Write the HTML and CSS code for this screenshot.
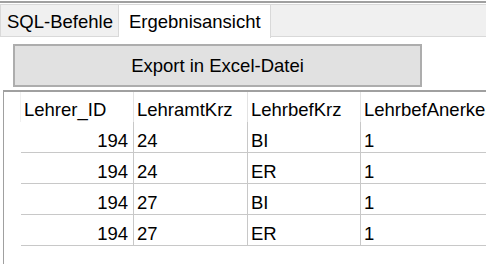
FILE: index.html
```html
<!DOCTYPE html>
<html>
<head>
<meta charset="utf-8">
<link rel="stylesheet" href="styles.css">
</head>
<body>
<div class="window">
  <div class="topline"></div>
  <div class="tabbar">
    <div class="tab">SQL-Befehle</div>
    <div class="tab active">Ergebnisansicht</div>
    <div class="filler"></div>
  </div>
  <div class="toolbar">
    <div class="button">Export in Excel-Datei</div>
  </div>
  <div class="tableframe">
    <div class="grid">
      <div class="corner"></div>
      <div class="hcell">Lehrer_ID</div>
      <div class="hcell">LehramtKrz</div>
      <div class="hcell">LehrbefKrz</div>
      <div class="hcell last">LehrbefAnerkennung</div>

      <div class="vh"></div>
      <div class="cell num">194</div>
      <div class="cell">24</div>
      <div class="cell">BI</div>
      <div class="cell last">1</div>

      <div class="vh"></div>
      <div class="cell num">194</div>
      <div class="cell">24</div>
      <div class="cell">ER</div>
      <div class="cell last">1</div>

      <div class="vh"></div>
      <div class="cell num">194</div>
      <div class="cell">27</div>
      <div class="cell">BI</div>
      <div class="cell last">1</div>

      <div class="vh"></div>
      <div class="cell num">194</div>
      <div class="cell">27</div>
      <div class="cell">ER</div>
      <div class="cell last">1</div>
    </div>
  </div>
</div>
</body>
</html>
```

FILE: styles.css
```css
html, body {
  margin: 0;
  padding: 0;
  background: #ffffff;
}
body {
  width: 486px;
  height: 264px;
  overflow: hidden;
  font-family: "Liberation Sans", Arial, sans-serif;
  font-size: 18.5px;
  color: #000000;
}
.window {
  display: flex;
  flex-direction: column;
  height: 264px;
}
.topline {
  margin-top: 1px;
  height: 2px;
  background: #a0a0a0;
}
.tabbar {
  margin-top: 1px;
  display: flex;
  height: 33px;
}
.tab {
  box-sizing: border-box;
  height: 33px;
  padding: 3px 6px 0 6px;
  line-height: 28px;
  white-space: nowrap;
  background: #f0f0f0;
  border: 1px solid #d9d9d9;
}
.tab:first-child {
  width: 119px;
  padding-left: 6px;
}
.tab.active {
  width: 152px;
  background: #ffffff;
  border-bottom: none;
  border-left: none;
  height: 34px;
  padding-left: 10px;
}
.filler {
  flex: 1;
  box-sizing: border-box;
  height: 33px;
  background: #f0f0f0;
  border-top: 1px solid #d9d9d9;
  border-bottom: 1px solid #d9d9d9;
}
.toolbar {
  display: flex;
  padding: 7px 0 0 13px;
}
.button {
  box-sizing: border-box;
  width: 409px;
  height: 43px;
  border: 2px solid #adadad;
  background: #e1e1e1;
  display: flex;
  align-items: center;
  justify-content: center;
  padding-top: 1px;
}
.tableframe {
  margin: 3px 0 0 3px;
  flex: 1;
  border-top: 2px solid #a0a0a0;
  border-left: 1px solid #a0a0a0;
  overflow: hidden;
}
.grid {
  display: grid;
  grid-template-columns: 17px 113px 114px 113px 200px;
  width: 557px;
}
.corner {
  height: 30px;
  border-right: 1px solid #f0f0f0;
}
.hcell {
  box-sizing: border-box;
  height: 30px;
  padding: 6px 0 0 3px;
  line-height: 24px;
  white-space: nowrap;
  overflow: hidden;
  border-right: 1px solid #e3e3e3;
}
.vh {
  height: 31px;
}
.cell {
  box-sizing: border-box;
  height: 31px;
  padding: 7px 0 0 3px;
  line-height: 23px;
  white-space: nowrap;
  border-right: 1px solid #c8c8c8;
  border-bottom: 1px solid #c8c8c8;
}
.cell.num {
  text-align: right;
  padding-left: 0;
  padding-right: 5px;
}
.last {
  border-right: none;
}
```
